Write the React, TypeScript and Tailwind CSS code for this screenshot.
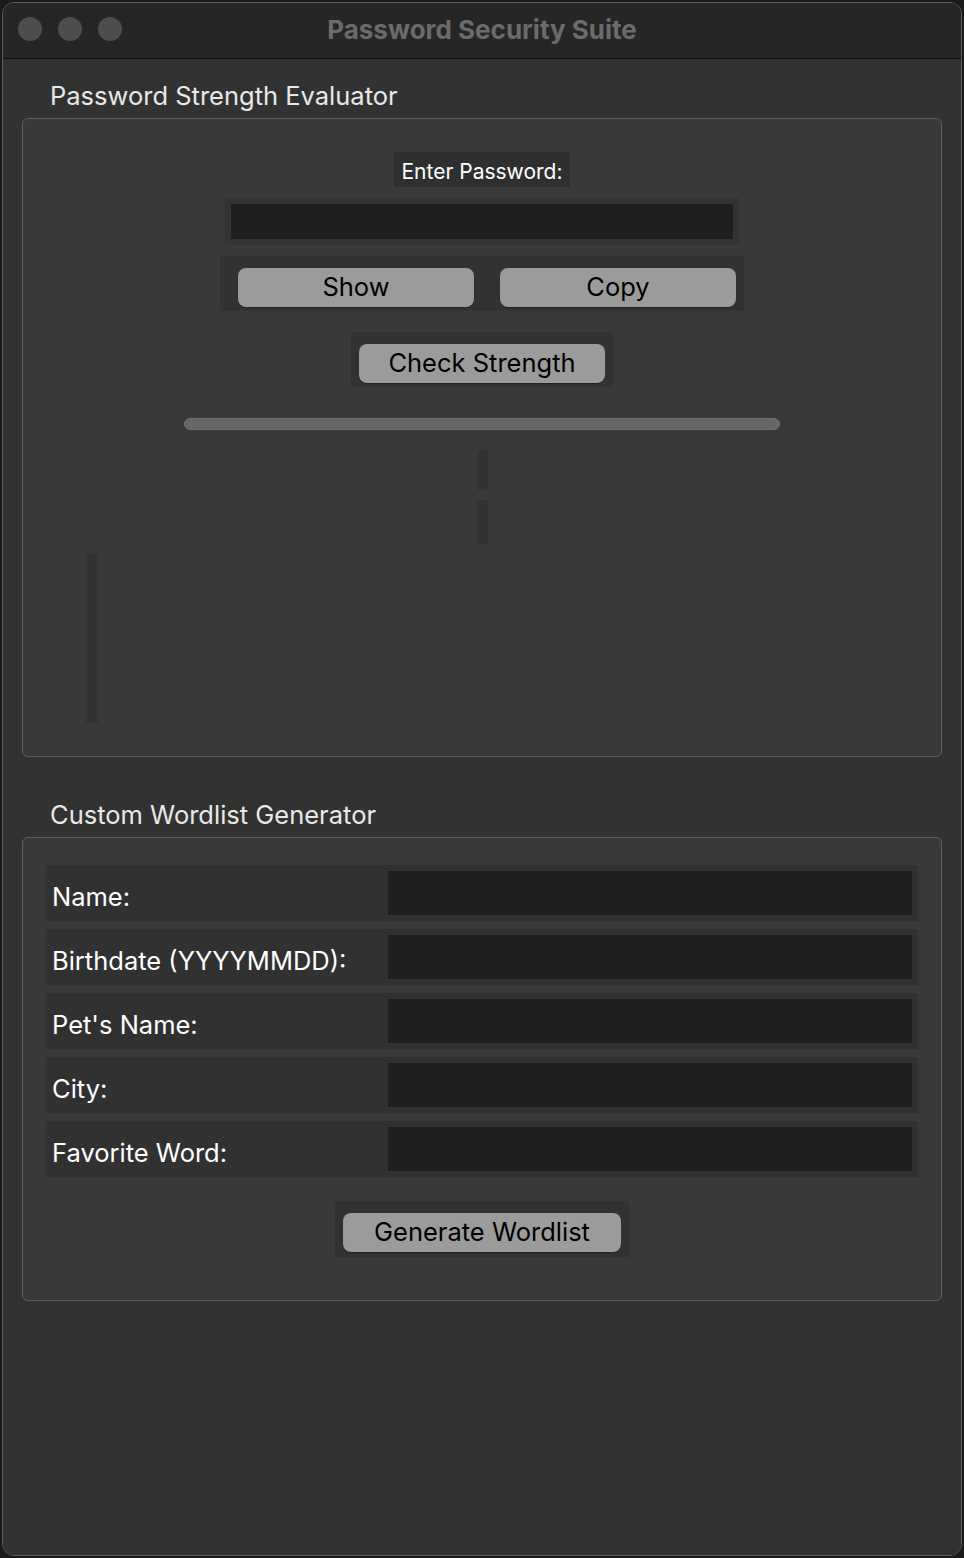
import React from "react";

const font = { fontFamily: "Inter, 'Noto Sans', sans-serif" };

function Btn({ label, className = "" }: { label: string; className?: string }) {
  return (
    <div
      className={`flex h-[39px] items-center justify-center rounded-[8px] bg-[#9b9b9b] text-[25.5px] text-black shadow-[0_1px_1px_rgba(0,0,0,0.35)] ${className}`}
    >
      {label}
    </div>
  );
}

function Field({ label }: { label: string }) {
  return (
    <div className="flex h-[56px] w-[872px] items-center bg-[#313131] pr-[6px]">
      <div className="w-[342px] pl-[6px] pt-[8px] text-[25.5px] text-white">{label}</div>
      <div className="h-[44px] flex-1 bg-[#1f1f1f]" />
    </div>
  );
}

export default function App() {
  const fields = ["Name:", "Birthdate (YYYYMMDD):", "Pet's Name:", "City:", "Favorite Word:"];

  return (
    <div className="h-[1558px] w-[964px] bg-[#1a1a1a] p-[2px]" style={font}>
      <div className="flex h-full w-full flex-col overflow-hidden rounded-[12px] border border-[#5c5c5c]">
        {/* title bar */}
        <div className="relative flex h-[56px] items-center justify-center border-b border-[#111] bg-[#262626] pb-[3px]">
          <div className="absolute left-[15px] top-[14px] flex gap-[16px]">
            <div className="h-[24px] w-[24px] rounded-full bg-[#4d4d4d]" />
            <div className="h-[24px] w-[24px] rounded-full bg-[#4d4d4d]" />
            <div className="h-[24px] w-[24px] rounded-full bg-[#4d4d4d]" />
          </div>
          <span className="text-[26px] font-bold text-[#6b6b6b]">Password Security Suite</span>
        </div>

        <div className="flex flex-1 flex-col bg-[#323232] px-[19px]">
          {/* Evaluator */}
          <div className="pb-[7px] pl-[28px] pt-[22px] text-[25.5px] leading-[30px] text-[#e8e8e8]">
            Password Strength Evaluator
          </div>
          <div className="flex h-[639px] flex-col items-center rounded-[6px] border border-[#5e5e5e] bg-[#393939]">
            <div className="mt-[33px] flex h-[35px] w-[176px] items-center justify-center bg-[#2f2f2f] pt-[5px] text-[21px] text-white">
              Enter Password:
            </div>
            <div className="mt-[11px] h-[47px] w-[514px] bg-[#333333] p-[6px]">
              <div className="h-full w-full bg-[#1f1f1f]" />
            </div>
            <div className="mt-[11px] flex h-[55px] w-[524px] gap-[26px] bg-[#323232] pl-[18px] pr-[8px] pt-[12px]">
              <Btn label="Show" className="w-[236px]" />
              <Btn label="Copy" className="w-[236px]" />
            </div>
            <div className="mt-[21px] h-[55px] w-[262px] bg-[#323232] px-[8px] pt-[12px]">
              <Btn label="Check Strength" className="w-full" />
            </div>
            <div className="mt-[31px] h-[12px] w-[596px] rounded-full border border-[#707070] bg-[#666666]" />
            <div className="mt-[20px] h-[40px] w-[11px] bg-[#333333]" />
            <div className="mt-[10px] h-[44px] w-[11px] bg-[#333333]" />
            <div className="ml-[63px] mt-[10px] h-[169px] w-[12px] self-start bg-[#333333]" />
          </div>

          {/* Wordlist */}
          <div className="pb-[7px] pl-[28px] pt-[43px] text-[25.5px] leading-[30px] text-[#e8e8e8]">
            Custom Wordlist Generator
          </div>
          <div className="flex h-[464px] flex-col items-center rounded-[6px] border border-[#5e5e5e] bg-[#393939] pt-[27px]">
            <div className="flex flex-col gap-[8px]">
              {fields.map((f) => (
                <Field key={f} label={f} />
              ))}
            </div>
            <div className="mt-[24px] h-[56px] w-[294px] bg-[#323232] px-[8px] pt-[12px]">
              <Btn label="Generate Wordlist" className="w-full" />
            </div>
          </div>
        </div>
      </div>
    </div>
  );
}
